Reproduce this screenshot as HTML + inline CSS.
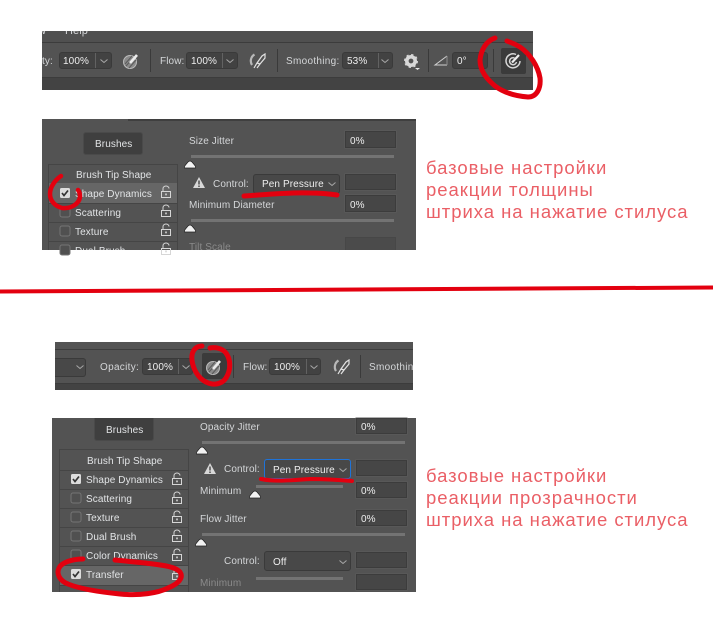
<!DOCTYPE html>
<html><head><meta charset="utf-8"><style>
html,body{margin:0;padding:0;background:#fff}
#p{position:relative;width:713px;height:623px;overflow:hidden;background:#fff;font-family:"Liberation Sans",sans-serif}
#p div{position:absolute;box-sizing:border-box}
.t{font-size:10px;line-height:14px;color:#d4d6d8;white-space:nowrap;letter-spacing:.1px;margin-top:1px}
.d{color:#8a8a8a}
.v{font-size:10px;line-height:14px;color:#eee;white-space:nowrap;letter-spacing:.1px;margin-top:1px}
.i{background:#464646;border:1px solid #3c3c3c;box-shadow:0 0 0 .5px #5e5e5e}
.s{background:#424242;border:1px solid #3a3a3a;border-radius:3px}
.sp{background:#3a3a3a;width:1px}
.dv{background:#626262;width:1px}
.sl{background:#737373;height:3px}
.r{font-size:10px;line-height:14px;color:#e2e4e6;white-space:nowrap;letter-spacing:.1px;margin-top:1px;font-family:"Liberation Sans",sans-serif}
.ru{font-size:18.5px;line-height:22px;color:#ea5f66;white-space:nowrap;letter-spacing:.96px}
svg{position:absolute;overflow:visible}
</style></head><body><div id="p">

<!-- toolbar 1 -->
<div style="left:42px;top:31px;width:491px;height:59px;background:#535353;overflow:hidden">
 <div style="left:0;top:0;width:491px;height:12px;background:#505050;border-bottom:1px solid #3c3c3c;overflow:hidden"><div class="t" style="left:-4px;top:-8px;font-size:11px">w</div><div class="t" style="left:23px;top:-8px;font-size:11px">Help</div></div>
 <div style="left:0;top:46px;width:491px;height:13px;background:#434343;border-top:1px solid #3c3c3c"></div>
</div>
<div class="t" style="left:42px;top:54px">ty:</div>
<div class="s" style="left:59px;top:52px;width:53px;height:17px"></div><div class="dv" style="left:95px;top:53px;height:15px"></div><div class="v" style="left:63px;top:54px">100%</div>
<div class="sp" style="left:150px;top:49px;height:23px"></div>
<div class="t" style="left:160px;top:54px">Flow:</div>
<div class="s" style="left:186px;top:52px;width:52px;height:17px"></div><div class="dv" style="left:222px;top:53px;height:15px"></div><div class="v" style="left:191px;top:54px">100%</div>
<div class="sp" style="left:277px;top:49px;height:23px"></div>
<div class="t" style="left:286px;top:54px;letter-spacing:.3px">Smoothing:</div>
<div class="s" style="left:342px;top:52px;width:51px;height:17px"></div><div class="dv" style="left:378px;top:53px;height:15px"></div><div class="v" style="left:347px;top:54px">53%</div>
<div class="sp" style="left:428px;top:49px;height:23px"></div>
<div class="s" style="left:452px;top:52px;width:36px;height:17px"></div><div class="v" style="left:457px;top:54px">0°</div>
<div class="sp" style="left:493px;top:49px;height:23px"></div>
<div style="left:501px;top:48px;width:25px;height:26px;background:#3b3b3b;border-radius:2px"></div>

<!-- toolbar 2 -->
<div style="left:55px;top:342px;width:358px;height:48px;background:#535353;overflow:hidden">
 <div style="left:0;top:7px;width:358px;height:1px;background:#3c3c3c"></div>
 <div style="left:0;top:41px;width:358px;height:7px;background:#434343;border-top:1px solid #3c3c3c"></div>
 <div class="t" style="left:314px;top:18px;letter-spacing:.3px">Smoothing:</div>
</div>
<div class="s" style="left:55px;top:358px;width:31px;height:19px;border-left:0;border-radius:0 3px 3px 0;background:#484848"></div>
<div class="t" style="left:100px;top:360px;letter-spacing:.3px">Opacity:</div>
<div class="s" style="left:142px;top:358px;width:51px;height:17px"></div><div class="dv" style="left:178px;top:359px;height:15px"></div><div class="v" style="left:147px;top:360px">100%</div>
<div style="left:202px;top:353px;width:25px;height:26px;background:#3b3b3b;border-radius:2px"></div>
<div class="sp" style="left:233px;top:355px;height:23px"></div>
<div class="t" style="left:243px;top:360px">Flow:</div>
<div class="s" style="left:269px;top:358px;width:52px;height:17px"></div><div class="dv" style="left:306px;top:359px;height:15px"></div><div class="v" style="left:274px;top:360px">100%</div>
<div class="sp" style="left:360px;top:355px;height:23px"></div>

<!-- panel 1 -->
<div style="left:42px;top:119px;width:374px;height:131px;background:#535353;overflow:hidden">
 <div style="left:86px;top:0;width:288px;height:2px;background:#3f3f3f"></div>
 <div style="left:6px;top:45px;width:130px;height:100px;border:1px solid #454545"></div>
 <div style="left:7px;top:64px;width:128px;height:20px;background:#666"></div>
 <div style="left:7px;top:84px;width:128px;height:1px;background:#454545"></div>
 <div style="left:7px;top:103px;width:128px;height:1px;background:#454545"></div>
 <div style="left:7px;top:122px;width:128px;height:1px;background:#454545"></div>
 <div class="r" style="left:34px;top:49px">Brush Tip Shape</div>
 <div class="r" style="left:33px;top:68px">Shape Dynamics</div>
 <div class="r" style="left:33px;top:87px">Scattering</div>
 <div class="r" style="left:33px;top:106px">Texture</div>
 <div class="r" style="left:33px;top:125px">Dual Brush</div>
</div>
<div style="left:83px;top:132px;width:60px;height:23px;background:#3f3f3f;border:1px solid #4a4a4a;border-radius:3px"></div>
<div class="r" style="left:95px;top:137px">Brushes</div>
<div class="t" style="left:189px;top:134px">Size Jitter</div>
<div class="i" style="left:345px;top:131px;width:51px;height:17px"></div><div class="v" style="left:350px;top:134px">0%</div>
<div class="sl" style="left:191px;top:155px;width:203px"></div>
<div class="t" style="left:213px;top:177px">Control:</div>
<div class="s" style="left:253px;top:174px;width:87px;height:20px;background:#484848"></div><div class="v" style="left:262px;top:177px">Pen Pressure</div>
<div class="i" style="left:345px;top:174px;width:51px;height:16px"></div>
<div class="t" style="left:189px;top:198px">Minimum Diameter</div>
<div class="i" style="left:345px;top:195px;width:51px;height:17px"></div><div class="v" style="left:350px;top:198px">0%</div>
<div class="sl" style="left:191px;top:219px;width:203px"></div>
<div class="t d" style="left:189px;top:240px">Tilt Scale</div>
<div style="left:345px;top:237px;width:51px;height:13px;background:#4b4b4b;border:1px solid #474747;border-bottom:0"></div>

<!-- panel 2 -->
<div style="left:52px;top:418px;width:364px;height:174px;background:#535353;overflow:hidden">
 <div style="left:7px;top:31px;width:130px;height:150px;border:1px solid #454545"></div>
 <div style="left:8px;top:147px;width:128px;height:20px;background:#666"></div>
 <div style="left:8px;top:52px;width:128px;height:1px;background:#454545"></div>
 <div style="left:8px;top:71px;width:128px;height:1px;background:#454545"></div>
 <div style="left:8px;top:90px;width:128px;height:1px;background:#454545"></div>
 <div style="left:8px;top:109px;width:128px;height:1px;background:#454545"></div>
 <div style="left:8px;top:128px;width:128px;height:1px;background:#454545"></div>
 <div style="left:8px;top:147px;width:128px;height:1px;background:#454545"></div>
 <div style="left:8px;top:167px;width:128px;height:1px;background:#454545"></div>
 <div class="r" style="left:35px;top:36px">Brush Tip Shape</div>
 <div class="r" style="left:34px;top:55px">Shape Dynamics</div>
 <div class="r" style="left:34px;top:74px">Scattering</div>
 <div class="r" style="left:34px;top:93px">Texture</div>
 <div class="r" style="left:34px;top:112px">Dual Brush</div>
 <div class="r" style="left:34px;top:131px">Color Dynamics</div>
 <div class="r" style="left:34px;top:150px">Transfer</div>
</div>
<div style="left:94px;top:418px;width:60px;height:23px;background:#3f3f3f;border:1px solid #4a4a4a;border-top:0;border-radius:0 0 3px 3px"></div>
<div class="r" style="left:106px;top:423px">Brushes</div>
<div class="t" style="left:200px;top:420px">Opacity Jitter</div>
<div class="i" style="left:356px;top:418px;width:51px;height:16px"></div><div class="v" style="left:361px;top:420px">0%</div>
<div class="sl" style="left:202px;top:441px;width:203px"></div>
<div class="t" style="left:224px;top:462px">Control:</div>
<div class="s" style="left:264px;top:459px;width:87px;height:20px;border-color:#1f73d8;background:#484848"></div><div class="v" style="left:273px;top:463px">Pen Pressure</div>
<div class="i" style="left:356px;top:460px;width:51px;height:16px"></div>
<div class="t" style="left:200px;top:484px">Minimum</div>
<div class="sl" style="left:256px;top:485px;width:87px"></div>
<div class="i" style="left:356px;top:482px;width:51px;height:16px"></div><div class="v" style="left:361px;top:484px">0%</div>
<div class="t" style="left:200px;top:512px">Flow Jitter</div>
<div class="i" style="left:356px;top:510px;width:51px;height:16px"></div><div class="v" style="left:361px;top:512px">0%</div>
<div class="sl" style="left:202px;top:533px;width:203px"></div>
<div class="t" style="left:224px;top:554px">Control:</div>
<div class="s" style="left:264px;top:551px;width:87px;height:20px;background:#484848"></div><div class="v" style="left:273px;top:555px">Off</div>
<div class="i" style="left:356px;top:552px;width:51px;height:16px"></div>
<div class="t d" style="left:200px;top:576px">Minimum</div>
<div class="sl" style="left:256px;top:577px;width:87px"></div>
<div class="i" style="left:356px;top:574px;width:51px;height:16px"></div>

<!-- russian text -->
<div class="ru" style="left:426px;top:157px">базовые настройки</div>
<div class="ru" style="left:426px;top:179px">реакции толщины</div>
<div class="ru" style="left:426px;top:201px">штриха на нажатие стилуса</div>
<div class="ru" style="left:426px;top:465px">базовые настройки</div>
<div class="ru" style="left:426px;top:487px">реакции прозрачности</div>
<div class="ru" style="left:426px;top:509px">штриха на нажатие стилуса</div>

<!-- graphics -->
<svg width="713" height="623" style="left:0;top:0" viewBox="0 0 713 623">
<defs>
 <g id="chev"><path d="M-3.5-1.5L0 1.5L3.5-1.5" fill="none" stroke="#a8a8a8" stroke-width="1"/></g>
 <g id="thumb"><path d="M-5.5 4V2.500Q-5 1.500-2-2Q0-4 2-2Q5 1.500 5.500 2.500V4Z" fill="#f2f2f2" stroke="#222" stroke-width=".7"/></g>
 <g id="warn"><path d="M0-6L6 5H-6Z" fill="#d8d8d8"/><path d="M0-2.5V1.5M0 2.5V4" stroke="#444" stroke-width="1.4"/></g>
 <g id="lock"><path d="M-4.5-.5H4.5V5.5H-4.5Z" fill="none" stroke="#d6d6d6"/><path d="M-3-.5V-3.5A3 2.5 0 0 1 3-3.5" fill="none" stroke="#d6d6d6"/><rect x="-.8" y="1.5" width="1.6" height="1.8" fill="#d6d6d6"/></g>
 <g id="cb"><rect x="-5" y="-5" width="10" height="10" rx="2" fill="#505050" stroke="#757575"/></g>
 <g id="cbc"><rect x="-5" y="-5" width="10" height="10" rx="1.5" fill="#dcdcdc"/><path d="M-3 0L-1 2.5L3-2.5" fill="none" stroke="#333" stroke-width="1.7"/></g>
 <g id="hatch"><circle cx="-1" cy="1" r="6.5" fill="#8a8a8a" stroke="#bbb" stroke-width="1"/><path d="M-6 3L1-5M-5 5L3-4M-2 7L5-1" stroke="#5a5a5a" stroke-width="1"/><path d="M-1 2L6-6" stroke="#ececec" stroke-width="2.6"/></g>
 <g id="air"><path d="M-3.500-6.500A7.500 7.500 0 0 0-6 4" fill="none" stroke="#b8b8b8" stroke-width="2.200"/><path d="M-4 7L-1 2L4-5L7-7L7-3L2 3L-1 7M-1 2L2 3" fill="none" stroke="#e2e2e2" stroke-width="1.200"/></g>
</defs>

<use href="#chev" x="104" y="61"/><use href="#chev" x="230" y="61"/><use href="#chev" x="385" y="61"/>
<use href="#hatch" x="131" y="61"/><use href="#air" x="258" y="61"/>

<g transform="translate(411 61)"><circle r="4.2" fill="none" stroke="#d8d8d8" stroke-width="3.6"/><circle r="6" fill="none" stroke="#d8d8d8" stroke-width="2" stroke-dasharray="2.2 2.5"/></g>
<path d="M415 68h5l-2.500 2z" fill="#e8e8e8"/>
<path d="M447 56L435 65H447" fill="none" stroke="#d0d0d0" stroke-width="1"/><path d="M447 56V65" stroke="#8c8c8c" stroke-width="1"/>
<g transform="translate(513 61)" fill="none" stroke="#d8d8d8"><path d="M3-6.500A7 7 0 1 0 7 0" stroke-width="1.500"/><path d="M1.500-3A3.500 3.500 0 1 0 3.500 1" stroke-width="1.500"/><path d="M-1 1.500L6-6" stroke="#efefef" stroke-width="2.200"/></g>

<use href="#chev" x="80" y="367"/><use href="#chev" x="186" y="367"/><use href="#chev" x="314" y="367"/>
<use href="#hatch" x="214" y="367"/><use href="#air" x="342" y="367"/>

<use href="#chev" x="332" y="184"/><use href="#chev" x="343" y="470"/><use href="#chev" x="343" y="562"/>
<use href="#thumb" x="190" y="164"/><use href="#thumb" x="190" y="228"/>
<use href="#thumb" x="202" y="450"/><use href="#thumb" x="255" y="494"/><use href="#thumb" x="201" y="542"/>
<use href="#warn" x="199" y="183"/><use href="#warn" x="210" y="469"/>

<use href="#cbc" x="65" y="193"/><use href="#cb" x="65" y="212"/><use href="#cb" x="65" y="231"/><use href="#cb" x="65" y="250"/>
<use href="#lock" x="166" y="192"/><use href="#lock" x="166" y="211"/><use href="#lock" x="166" y="230"/><use href="#lock" x="166" y="249"/>

<use href="#cbc" x="76" y="479"/><use href="#cb" x="76" y="498"/><use href="#cb" x="76" y="517"/><use href="#cb" x="76" y="536"/><use href="#cb" x="76" y="555"/><use href="#cbc" x="76" y="574"/>
<use href="#lock" x="177" y="479"/><use href="#lock" x="177" y="498"/><use href="#lock" x="177" y="517"/><use href="#lock" x="177" y="536"/><use href="#lock" x="177" y="555"/><use href="#lock" x="177" y="574"/>

<g fill="none" stroke="#e3000f" stroke-linecap="round" stroke-linejoin="round">
 <path d="M0 291.500L713 287.500" stroke-width="4" stroke-linecap="butt"/>
 <path d="M495 38C486 41 481 50 480 60C480 72 488 80 495 86C503 92 515 96 528 97C537 97 541 88 540 78C538 66 530 54 520 47C515 44 510 42 507 41" stroke-width="5"/>
 <path d="M61 176C55 180 50 187 50 194C50 201 55 206 62 208C71 209 79 204 80 197C80 193 79 191 78 190" stroke-width="4.500"/>
 <path d="M244 196C260 195 290 192 310 193C320 193 330 194 337 195" stroke-width="5"/>
 <path d="M202 346C195 346 191 352 192 360C193 369 198 378 206 382C214 386 222 384 226 378C231 370 231 360 226 353C222 348 215 347 210 348" stroke-width="5"/>
 <path d="M261 479C275 482 295 480 310 479C325 479 340 480 352 481" stroke-width="4"/>
 <path d="M83 559C73 559 62 562 59 568C56 574 60 581 68 584C80 589 100 592 120 594C140 596 158 593 168 588C178 584 184 578 180 572C175 566 160 565 145 563C135 562 125 561 115 560" stroke-width="5"/>
</g>
</svg>
</div></body></html>
